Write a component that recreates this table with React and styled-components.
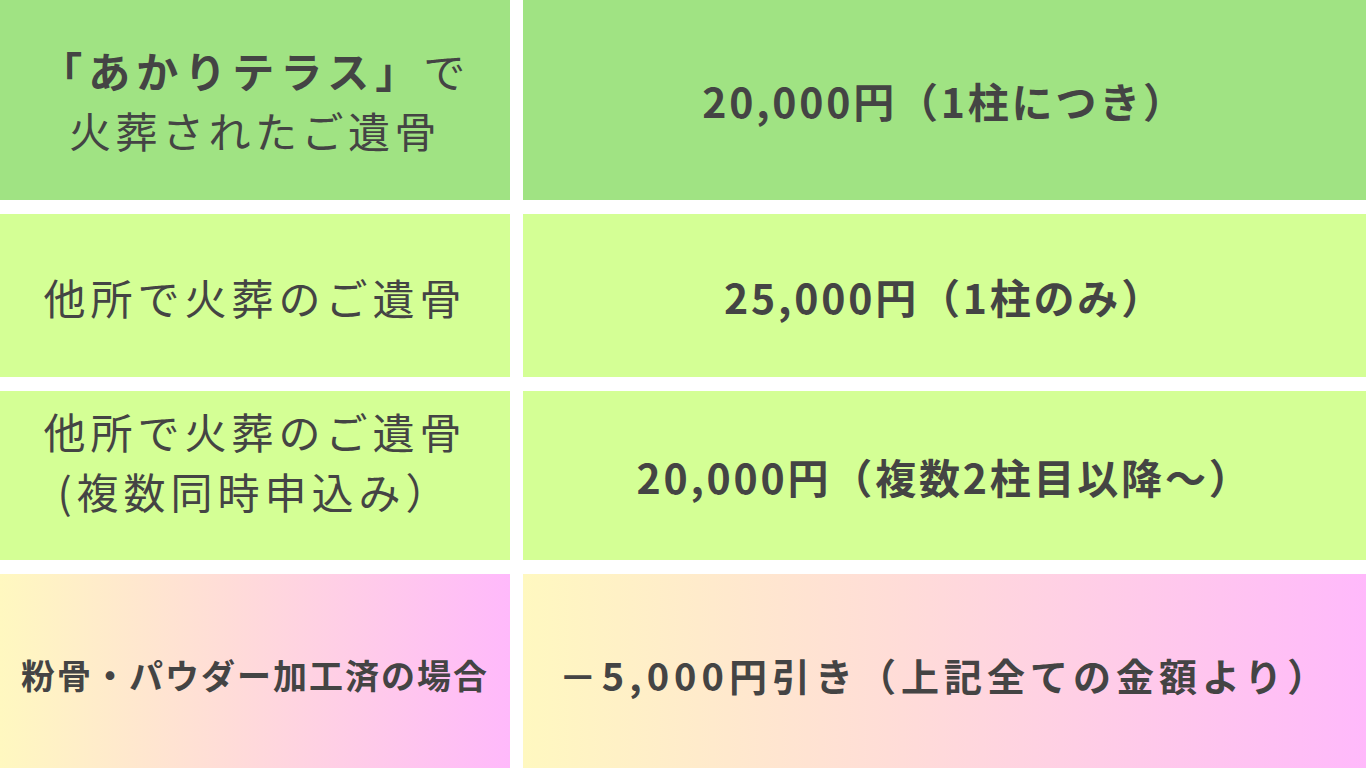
import React from "react";
import styled, { createGlobalStyle, css } from "styled-components";

const Global = createGlobalStyle`
  html, body { margin: 0; padding: 0; background: #ffffff; }
  body { font-family: "Noto Sans CJK JP", "Noto Sans", sans-serif; color: #444444; }
`;

const Table = styled.div`
  display: grid;
  grid-template-columns: 510px 1fr;
  grid-template-rows: 200px 163px 169px 194px;
  column-gap: 13px;
  row-gap: 14px;
  width: 1366px;
  height: 768px;
  overflow: hidden;
`;

const tones = {
  main: css`background: #a0e383;`,
  light: css`background: #d4ff95;`,
  grad: css`background: linear-gradient(90deg, #fff8c0 0%, #ffdcd8 45%, #ffb9fb 100%);`,
};

const Cell = styled.div`
  ${(p) => tones[p.$tone]}
  display: flex;
  flex-direction: column;
  align-items: center;
  justify-content: center;
  text-align: center;
  padding-bottom: ${(p) => (p.$shift < 0 ? -p.$shift : 0)}px;
  padding-top: ${(p) => (p.$shift > 0 ? p.$shift : 0)}px;
  box-sizing: border-box;
`;

const Label = styled.div`
  font-size: ${(p) => p.$size || 42}px;
  font-weight: ${(p) => (p.$bold ? 700 : 400)};
  letter-spacing: ${(p) => (p.$ls != null ? p.$ls : 4.5)}px;
  line-height: ${(p) => p.$lh || 60}px;
  white-space: nowrap;
  color: #444444;
`;

const Strong = styled.span`
  font-weight: 700;
  letter-spacing: 6px;
`;

const Price = styled.div`
  font-size: ${(p) => p.$size || 41}px;
  font-weight: 700;
  letter-spacing: ${(p) => (p.$ls != null ? p.$ls : 2.8)}px;
  white-space: nowrap;
  color: #444444;
`;

export default function App() {
  return (
    <>
      <Global />
      <Table>
        <Cell $tone="main">
          <Label>
            <Strong>「あかりテラス」</Strong>で
          </Label>
          <Label>火葬されたご遺骨</Label>
        </Cell>
        <Cell $tone="main">
          <Price>20,000円（1柱につき）</Price>
        </Cell>

        <Cell $tone="light" $shift={2}>
          <Label $ls={5}>他所で火葬のご遺骨</Label>
        </Cell>
        <Cell $tone="light">
          <Price>25,000円（1柱のみ）</Price>
        </Cell>

        <Cell $tone="light" $shift={-30}>
          <Label $ls={5}>他所で火葬のご遺骨</Label>
          <Label $ls={5}>(複数同時申込み）</Label>
        </Cell>
        <Cell $tone="light">
          <Price>20,000円（複数2柱目以降～）</Price>
        </Cell>

        <Cell $tone="grad" $shift={8}>
          <Label $size={34} $bold $ls={2}>粉骨・パウダー加工済の場合</Label>
        </Cell>
        <Cell $tone="grad" $shift={6}>
          <Price $size={38} $ls={5}>－5,000円引き（上記全ての金額より）</Price>
        </Cell>
      </Table>
    </>
  );
}
